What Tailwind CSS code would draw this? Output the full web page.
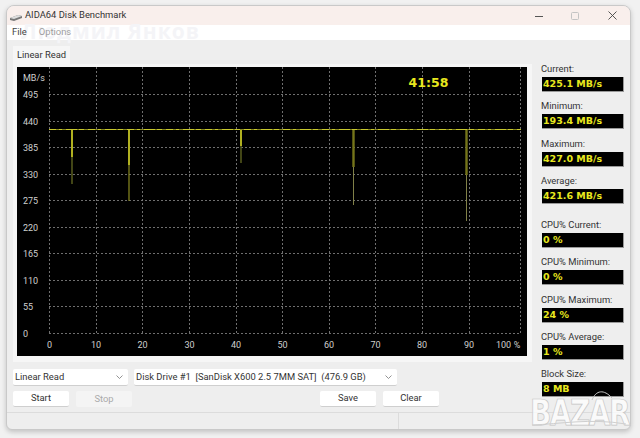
<!DOCTYPE html>
<html>
<head>
    <title>AIDA64 Disk Benchmark</title>
    <script src="https://cdn.jsdelivr.net/npm/@tailwindcss/browser@4"></script>
</head>
<body class="relative bg-[#f1f1f1] w-[640px] h-[438px] overflow-hidden font-['Roboto',sans-serif] text-[9.4px] text-[#222]">
    <div class="relative ml-[6px] mt-[5px] w-[625px] h-[425px] flex flex-col bg-[#eeeeee] rounded-t-lg rounded-b-md border border-[#c9c9c9] shadow-[0_2px_5px_rgba(0,0,0,0.2)] overflow-hidden">

        <!-- title bar -->
        <div class="h-[19px] bg-[#f9efec] flex items-center shrink-0">
            <svg class="ml-[3px] w-[12px] h-[8px] mt-[3px]" viewBox="0 0 12 8">
                <path d="M0 5 L8 2 L12 3 L12 5 L4 8 L0 7 Z" fill="#777"/>
                <path d="M0 5 L8 2 L12 3 L4 6 Z" fill="#ddd"/>
            </svg>
            <span class="ml-[3px] text-[9.4px] text-[#333]">AIDA64 Disk Benchmark</span>
            <div class="ml-auto flex items-center">
                <svg class="w-[8px] h-[8px] mr-[28px]" viewBox="0 0 8 8"><path d="M0 4.5H8" stroke="#555" stroke-width="1"/></svg>
                <svg class="w-[8px] h-[8px] mr-[29px]" viewBox="0 0 8 8"><rect x="0.5" y="0.5" width="7" height="7" rx="1" fill="none" stroke="#c4c4c4"/></svg>
                <svg class="w-[9px] h-[9px] mr-[13px]" viewBox="0 0 9 9"><path d="M0.5 0.5L8.5 8.5M8.5 0.5L0.5 8.5" stroke="#444" stroke-width="0.9"/></svg>
            </div>
        </div>

        <!-- menu -->
        <div class="relative h-[15px] bg-white shrink-0">
            <div class="absolute left-[14px] top-[-5px] text-[21px] leading-[22px] font-bold tracking-[1px] text-[#f4f4f7] font-['Open_Sans',sans-serif] whitespace-nowrap">Людмил Янков</div>
            <div class="relative h-full flex items-center gap-[12px] pl-[5px] text-[#444]">
                <span>File</span>
                <span class="opacity-50">Options</span>
            </div>
        </div>

        <div class="flex flex-1 min-h-0">
            <!-- left side -->
            <div class="w-[527px] shrink-0 pl-[6px]">
                <div class="mt-[6px] w-[57px] h-[18px] bg-[#f6f6f6] flex items-center justify-center text-[#333]">Linear Read</div>
                <div class="w-[519px] h-[298px] bg-[#f6f6f6] pl-[4px] pt-[3px]">
                    <svg class="block bg-black" width="510" height="289" viewBox="17 67 510 289">
                        <g stroke="#7c7c7c" stroke-width="0.9" stroke-dasharray="2 2" fill="none">
                            <path d="M49.5 67V333M96.5 67V333M142.5 67V333M189.5 67V333M236.5 67V333M282.5 67V333M329.5 67V333M375.5 67V333M422.5 67V333M469.5 67V333M520.5 67V333"/>
                            <path d="M49 94.5H521M49 121.5H521M49 147.5H521M49 174.5H521M49 200.5H521M49 227.5H521M49 253.5H521M49 280.5H521M49 306.5H521M49 333.5H521"/>
                        </g>
                        <path d="M49 129.5H521" stroke="#85851c" stroke-width="1"/>
                        <path d="M49 129.5H521" stroke="#c8c82e" stroke-width="1" stroke-dasharray="7 3 3 4 11 2 5 4"/>
                        <path d="M72 130V157M129 130V165M241 130V146" stroke="#b0b020" stroke-width="2"/>
                        <path d="M353.5 130V167M466.5 130V175" stroke="#75751a" stroke-width="2.4"/>
                        <path d="M72 157V184M241 146V163" stroke="#5f6420" stroke-width="1.4"/>
                        <path d="M129 165V201" stroke="#8c8c20" stroke-width="1.2"/>
                        <path d="M353.5 167V205M466.5 175V221" stroke="#8f8f50" stroke-width="0.9"/>
                        <g fill="#cfcfcf" font-family="Roboto, sans-serif" font-size="9">
                            <text x="23" y="81">MB/s</text>
                            <text x="23" y="98">495</text>
                            <text x="23" y="125">440</text>
                            <text x="23" y="151">385</text>
                            <text x="23" y="178">330</text>
                            <text x="23" y="204">275</text>
                            <text x="23" y="231">220</text>
                            <text x="23" y="257">165</text>
                            <text x="23" y="284">110</text>
                            <text x="23" y="310">55</text>
                            <text x="23" y="337">0</text>
                        </g>
                        <g fill="#cfcfcf" font-family="Roboto, sans-serif" font-size="9" text-anchor="middle">
                            <text x="49.5" y="347.5">0</text>
                            <text x="96" y="347.5">10</text>
                            <text x="142.5" y="347.5">20</text>
                            <text x="189.5" y="347.5">30</text>
                            <text x="236" y="347.5">40</text>
                            <text x="282.5" y="347.5">50</text>
                            <text x="329" y="347.5">60</text>
                            <text x="375.5" y="347.5">70</text>
                            <text x="422" y="347.5">80</text>
                            <text x="469" y="347.5">90</text>
                            <text x="503.5" y="347.5">100</text>
                            <text x="517" y="347.5">%</text>
                        </g>
                        <text x="428.5" y="87" text-anchor="middle" fill="#e8e81e" font-family="DejaVu Sans, sans-serif" font-weight="700" font-size="12.5">41:58</text>
                    </svg>
                </div>

                <div class="mt-[7px] flex gap-[6px]">
                    <div class="w-[115px] h-[17px] bg-white border-b border-[#cfcfcf] rounded-[2px] flex items-center justify-between pl-[2px] pr-[5px] text-[#333]">
                        <span>Linear Read</span>
                        <svg class="w-[7px] h-[4px]" viewBox="0 0 7 4"><path d="M0.5 0.5L3.5 3.5L6.5 0.5" fill="none" stroke="#777" stroke-width="0.8"/></svg>
                    </div>
                    <div class="w-[263px] h-[17px] bg-white border-b border-[#cfcfcf] rounded-[2px] flex items-center justify-between pl-[2px] pr-[5px] text-[#333]">
                        <span class="whitespace-pre">Disk Drive #1  [SanDisk X600 2.5 7MM SAT]  (476.9 GB)</span>
                        <svg class="w-[7px] h-[4px]" viewBox="0 0 7 4"><path d="M0.5 0.5L3.5 3.5L6.5 0.5" fill="none" stroke="#777" stroke-width="0.8"/></svg>
                    </div>
                </div>

                <div class="mt-[5px] flex w-[426px] text-[#333]">
                    <button class="w-[56px] h-[16px] bg-white border-b border-[#cfcfcf] rounded-[2px]">Start</button>
                    <button class="ml-[7px] w-[56px] h-[16px] bg-[#f4f4f4] rounded-[2px] text-[#aaa]">Stop</button>
                    <button class="ml-auto w-[56px] h-[16px] bg-white border-b border-[#cfcfcf] rounded-[2px]">Save</button>
                    <button class="ml-[7px] w-[56px] h-[16px] bg-white border-b border-[#cfcfcf] rounded-[2px]">Clear</button>
                </div>
            </div>

            <!-- stats column -->
            <div class="pl-[7px] pt-[21px] w-[96px] text-[#333]">
                <div class="h-[37.3px]"><div class="h-[15px] leading-[15px]">Current:</div><div class="mt-[1px] ml-[1px] w-[82px] h-[15px] bg-black border-r border-b border-[#999] leading-[14px] pl-[1px] text-[#e8e81e] font-['DejaVu_Sans',sans-serif] font-bold text-[9.5px]">425.1 MB/s</div></div>
                <div class="h-[37.3px]"><div class="h-[15px] leading-[15px]">Minimum:</div><div class="mt-[1px] ml-[1px] w-[82px] h-[15px] bg-black border-r border-b border-[#999] leading-[14px] pl-[1px] text-[#e8e81e] font-['DejaVu_Sans',sans-serif] font-bold text-[9.5px]">193.4 MB/s</div></div>
                <div class="h-[37.3px]"><div class="h-[15px] leading-[15px]">Maximum:</div><div class="mt-[1px] ml-[1px] w-[82px] h-[15px] bg-black border-r border-b border-[#999] leading-[14px] pl-[1px] text-[#e8e81e] font-['DejaVu_Sans',sans-serif] font-bold text-[9.5px]">427.0 MB/s</div></div>
                <div class="h-[44.3px]"><div class="h-[15px] leading-[15px]">Average:</div><div class="mt-[1px] ml-[1px] w-[82px] h-[15px] bg-black border-r border-b border-[#999] leading-[14px] pl-[1px] text-[#e8e81e] font-['DejaVu_Sans',sans-serif] font-bold text-[9.5px]">421.6 MB/s</div></div>
                <div class="h-[37.3px]"><div class="h-[15px] leading-[15px]">CPU% Current:</div><div class="mt-[1px] ml-[1px] w-[82px] h-[15px] bg-black border-r border-b border-[#999] leading-[14px] pl-[1px] text-[#e8e81e] font-['DejaVu_Sans',sans-serif] font-bold text-[9.5px]">0 %</div></div>
                <div class="h-[37.3px]"><div class="h-[15px] leading-[15px]">CPU% Minimum:</div><div class="mt-[1px] ml-[1px] w-[82px] h-[15px] bg-black border-r border-b border-[#999] leading-[14px] pl-[1px] text-[#e8e81e] font-['DejaVu_Sans',sans-serif] font-bold text-[9.5px]">0 %</div></div>
                <div class="h-[37.3px]"><div class="h-[15px] leading-[15px]">CPU% Maximum:</div><div class="mt-[1px] ml-[1px] w-[82px] h-[15px] bg-black border-r border-b border-[#999] leading-[14px] pl-[1px] text-[#e8e81e] font-['DejaVu_Sans',sans-serif] font-bold text-[9.5px]">24 %</div></div>
                <div class="h-[37.3px]"><div class="h-[15px] leading-[15px]">CPU% Average:</div><div class="mt-[1px] ml-[1px] w-[82px] h-[15px] bg-black border-r border-b border-[#999] leading-[14px] pl-[1px] text-[#e8e81e] font-['DejaVu_Sans',sans-serif] font-bold text-[9.5px]">1 %</div></div>
                <div class="h-[37.3px]"><div class="h-[15px] leading-[15px]">Block Size:</div><div class="mt-[1px] ml-[1px] w-[82px] h-[15px] bg-black border-r border-b border-[#999] leading-[14px] pl-[1px] text-[#e8e81e] font-['DejaVu_Sans',sans-serif] font-bold text-[9.5px]">8 MB</div></div>
            </div>
        </div>

        <!-- status bar -->
        <div class="h-[17px] border-t border-[#dcdcdc] shrink-0 flex">
            <div class="w-[392px] border-r border-[#dcdcdc]"></div>
        </div>
    </div>

    <!-- bazar watermark -->
    <div class="absolute left-[530px] top-[394px] origin-top scale-y-[1.25] text-[28px] leading-[32px] font-black text-white/75 tracking-[-1.5px] font-['DejaVu_Sans',sans-serif] [-webkit-text-stroke:0.6px_#c4c4c4]">BAZAR</div>
    <svg class="absolute left-[530px] top-[386px]" width="104" height="46" viewBox="0 0 104 46">
        <path d="M62 14C66 4 74 3 82 12" fill="none" stroke="#c4c4c4" stroke-width="1"/>
        <path d="M2 39C30 38 60 32 96 38" fill="none" stroke="#cfcfcf" stroke-width="1"/>
    </svg>
</body>
</html>
